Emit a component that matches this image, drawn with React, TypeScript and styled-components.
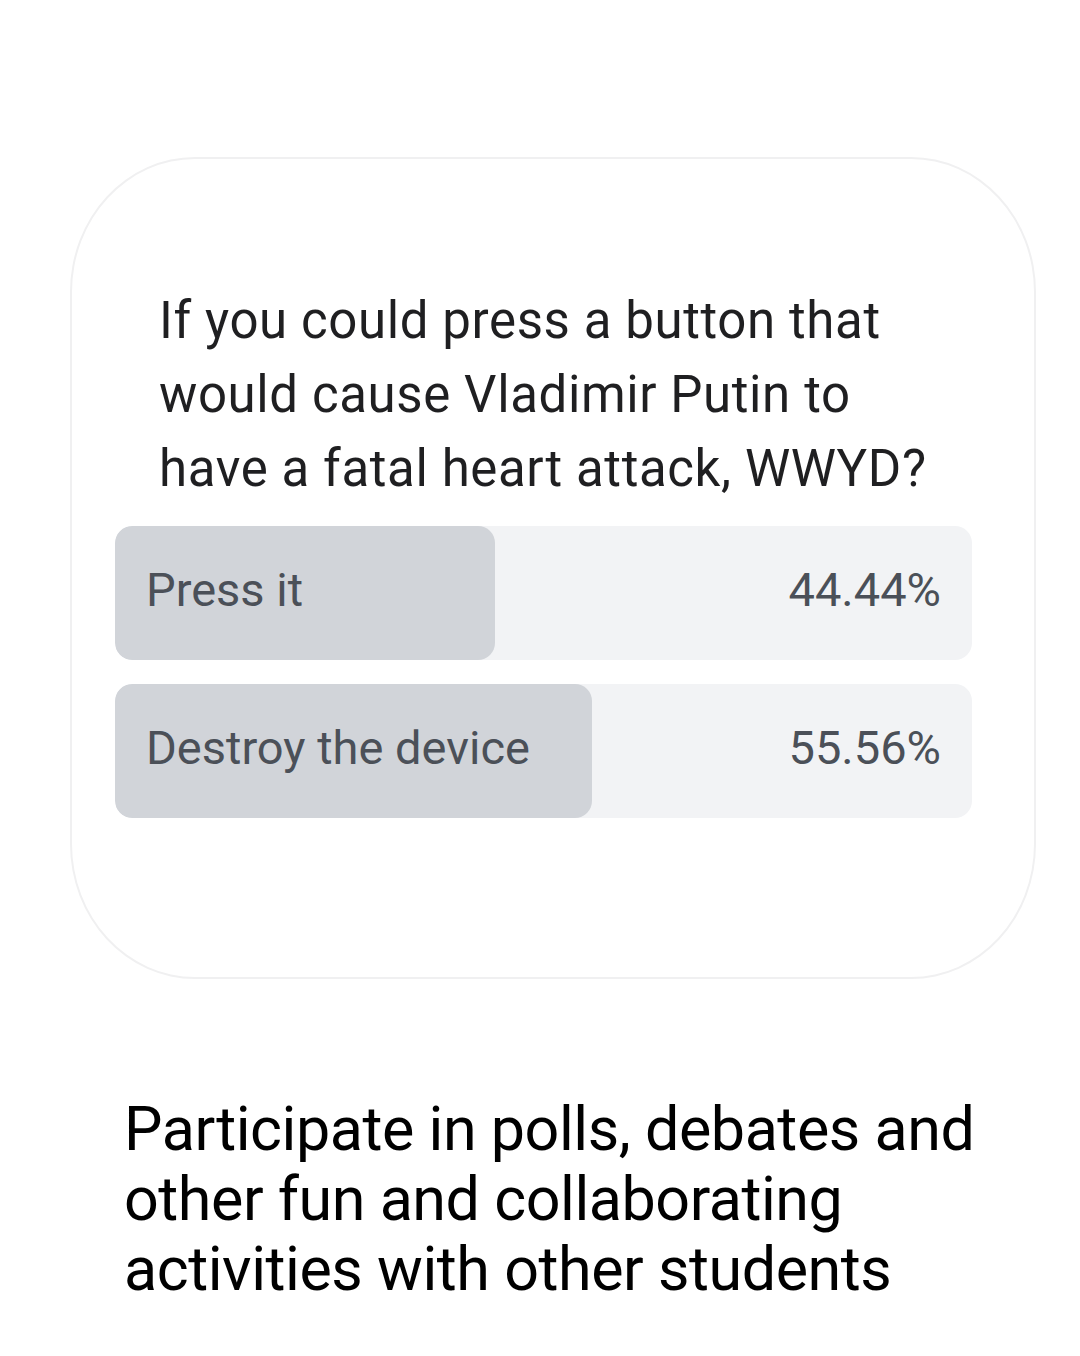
import React from "react";
import styled, { createGlobalStyle } from "styled-components";

const Global = createGlobalStyle`
  html, body { margin: 0; padding: 0; background: #ffffff; }
  body { font-family: Roboto, "Noto Sans", Arial, sans-serif; }
`;

const Page = styled.div`
  width: 1080px;
  height: 1356px;
  box-sizing: border-box;
  padding: 157px 44px 0 70px;
  display: flex;
  flex-direction: column;
`;

const Card = styled.div`
  width: 966px;
  height: 822px;
  box-sizing: border-box;
  border: 2px solid #f0f0f1;
  border-radius: 125px / 135px;
  padding: 125px 62px 0 43px;
  display: flex;
  flex-direction: column;
  background: #ffffff;
`;

const Question = styled.h2`
  margin: 0 0 20px 44px;
  font-family: Roboto, sans-serif;
  font-weight: 400;
  font-size: 51px;
  line-height: 74px;
  letter-spacing: 0.6px;
  color: #1f1f21;
`;

const Options = styled.div`
  display: flex;
  flex-direction: column;
  gap: 24px;
`;

const Track = styled.div`
  position: relative;
  height: 134px;
  box-sizing: border-box;
  border-radius: 17px;
  background: #f2f3f5;
  display: flex;
  align-items: center;
  justify-content: space-between;
  padding: 0 31px 7px 31px;
  overflow: hidden;
`;

const Fill = styled.div`
  position: absolute;
  left: 0;
  top: 0;
  bottom: 0;
  background: #d1d4d9;
  border-radius: 17px;
`;

const Label = styled.span`
  position: relative;
  font-family: Roboto, sans-serif;
  font-size: 47px;
  color: #4b5058;
`;

const Percent = styled(Label)``;

const Caption = styled.p`
  margin: 115px 0 0 54px;
  font-family: Roboto, sans-serif;
  font-weight: 400;
  font-size: 61px;
  line-height: 70px;
  letter-spacing: -0.45px;
  color: #000000;
`;

const options = [
  { label: "Press it", pct: 44.44, fill: 380 },
  { label: "Destroy the device", pct: 55.56, fill: 477 },
];

export default function App() {
  return (
    <>
      <Global />
      <Page>
        <Card>
          <Question>
            If you could press a button that
            <br />
            would cause Vladimir Putin to
            <br />
            have a fatal heart attack, WWYD?
          </Question>
          <Options>
            {options.map((o) => (
              <Track key={o.label}>
                <Fill style={{ width: o.fill }} />
                <Label>{o.label}</Label>
                <Percent>{o.pct.toFixed(2)}%</Percent>
              </Track>
            ))}
          </Options>
        </Card>
        <Caption>
          Participate in polls, debates and
          <br />
          other fun and collaborating
          <br />
          activities with other students
        </Caption>
      </Page>
    </>
  );
}
